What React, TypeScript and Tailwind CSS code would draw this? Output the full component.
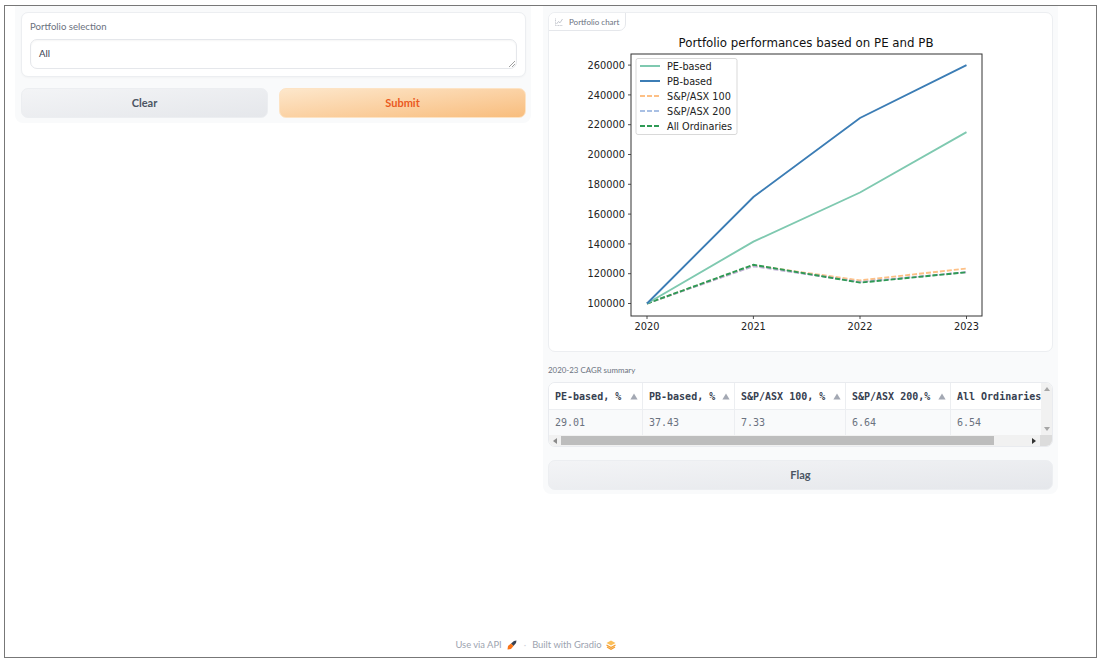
const ys = (v: number) => 303.5 - ((v - 100000) / 20000) * 29.8
const xs = [647, 753.4, 860, 966.5]

const series = [
  { label: "S&P/ASX 100", color: "#fdc086", dash: "5 2", data: [100000, 125500, 115500, 123500] },
  { label: "S&P/ASX 200", color: "#beaed4", dash: "5 2", data: [100000, 125000, 114500, 121000] },
  { label: "All Ordinaries", color: "#2e9a55", dash: "5 2", data: [100000, 126000, 114000, 121000] },
  { label: "PE-based", color: "#7fc9b0", dash: "", data: [100000, 141500, 174500, 215000] },
  { label: "PB-based", color: "#3c7db5", dash: "", data: [100000, 171500, 224500, 260000] },
]

const legend = [
  { label: "PE-based", color: "#7fc9b0", dash: "" },
  { label: "PB-based", color: "#3c7db5", dash: "" },
  { label: "S&P/ASX 100", color: "#fdc086", dash: "5 2" },
  { label: "S&P/ASX 200", color: "#a9c0e4", dash: "5 2" },
  { label: "All Ordinaries", color: "#2e9a55", dash: "5 2" },
]

const columns = [
  { name: "PE-based, %", value: "29.01", width: "w-[94px]" },
  { name: "PB-based, %", value: "37.43", width: "w-[92px]" },
  { name: "S&P/ASX 100, %", value: "7.33", width: "w-[111px]" },
  { name: "S&P/ASX 200,%", value: "6.64", width: "w-[105px]" },
]

function Chart() {
  // svg coords are page coords shifted by the card origin
  return (
    <svg width="503" height="338" viewBox="549 13 503 338" className="block">
      <text x="806" y="47" textAnchor="middle" fontFamily="DejaVu Sans" fontSize="11.8" fill="#111">
        Portfolio performances based on PE and PB
      </text>
      {[100000, 120000, 140000, 160000, 180000, 200000, 220000, 240000, 260000].map(v => (
        <g key={v}>
          <line x1="628" x2="631" y1={ys(v)} y2={ys(v)} stroke="#222" strokeWidth="0.8" />
          <text x="625" y={ys(v) + 3.6} textAnchor="end" fontFamily="DejaVu Sans" fontSize="9.8" fill="#222">
            {v}
          </text>
        </g>
      ))}
      {xs.map((x, i) => (
        <g key={x}>
          <line x1={x} x2={x} y1="316" y2="319" stroke="#222" strokeWidth="0.8" />
          <text x={x} y="330" textAnchor="middle" fontFamily="DejaVu Sans" fontSize="9.8" fill="#222">
            {2020 + i}
          </text>
        </g>
      ))}
      {series.map(s => (
        <polyline
          key={s.label}
          points={s.data.map((v, i) => `${xs[i]},${ys(v)}`).join(" ")}
          fill="none"
          stroke={s.color}
          strokeWidth="1.9"
          strokeDasharray={s.dash}
        />
      ))}
      <rect x="631" y="54" width="351" height="262" fill="none" stroke="#333" strokeWidth="1" />
      <rect x="636" y="58.5" width="101" height="76" rx="2" fill="#fff" fillOpacity="0.85" stroke="#d5d5d5" strokeWidth="0.9" />
      {legend.map((l, i) => (
        <g key={l.label}>
          <line x1="640" x2="660" y1={66 + i * 15} y2={66 + i * 15} stroke={l.color} strokeWidth="1.9" strokeDasharray={l.dash} />
          <text x="667" y={69.6 + i * 15} fontFamily="DejaVu Sans" fontSize="9.7" fill="#222">
            {l.label}
          </text>
        </g>
      ))}
    </svg>
  )
}

function SortArrow() {
  return (
    <svg width="8" height="7" viewBox="0 0 8 7" className="shrink-0">
      <path d="M4 0.5 L7.6 6.5 L0.4 6.5 Z" fill="#a3a8b3" />
    </svg>
  )
}

function Table() {
  return (
    <div className="flex h-[65px] w-[505px] flex-col overflow-hidden rounded-[7px] border border-[#e9ebef] bg-white font-['DejaVu_Sans_Mono',monospace] text-[10px]">
      <div className="flex h-[52px]">
        <div className="flex w-[492px] flex-col">
          <div className="flex h-[27px] border-b border-[#eceef1] bg-white font-bold text-[#374151]">
            {columns.map(c => (
              <div key={c.name} className={`flex ${c.width} items-center justify-between border-r border-[#eceef1] pl-[6px] pr-[4px]`}>
                <span className="whitespace-nowrap">{c.name}</span>
                <SortArrow />
              </div>
            ))}
            <div className="flex flex-1 items-center overflow-hidden pl-[6px] whitespace-nowrap">All Ordinaries</div>
          </div>
          <div className="flex h-[25px] bg-[#f9fafb] text-[#6b7280]">
            {columns.map(c => (
              <div key={c.name} className={`flex ${c.width} items-center border-r border-[#eceef1] pl-[6px]`}>
                {c.value}
              </div>
            ))}
            <div className="flex flex-1 items-center pl-[6px]">6.54</div>
          </div>
        </div>
        <div className="flex w-[12px] flex-col items-center justify-between bg-[#f1f1f1] py-[4px]">
          <svg width="6" height="4" viewBox="0 0 6 4"><path d="M3 0 L6 4 L0 4 Z" fill="#a6a6a6" /></svg>
          <svg width="6" height="4" viewBox="0 0 6 4"><path d="M3 4 L6 0 L0 0 Z" fill="#a6a6a6" /></svg>
        </div>
      </div>
      <div className="flex h-[12px] items-center bg-[#f1f1f1]">
        <div className="flex w-[12px] justify-center">
          <svg width="4" height="6" viewBox="0 0 4 6"><path d="M0 3 L4 0 L4 6 Z" fill="#8a8a8a" /></svg>
        </div>
        <div className="h-[9px] w-[433px] bg-[#bdbdbd]" />
        <div className="flex flex-1 justify-end pr-[4px]">
          <svg width="4" height="6" viewBox="0 0 4 6"><path d="M4 3 L0 0 L0 6 Z" fill="#333" /></svg>
        </div>
        <div className="h-full w-[12px] bg-[#dcdcdc]" />
      </div>
    </div>
  )
}

export default function App() {
  return (
    <div className="h-[661px] w-[1097px] bg-white pl-[4px] pt-[5px] font-['Lato','Noto_Sans',sans-serif]">
      <div className="flex h-[653px] w-[1093px] flex-col border border-[#777]">
        <div className="flex items-start gap-[12px] pl-[10px]">
          {/* Left column */}
          <div className="flex w-[516px] flex-col gap-[11px] rounded-b-[8px] bg-[#f9fafb] pb-[5px] pl-[6px] pr-[5px] pt-[6px]">
            <div className="h-[65px] rounded-[7px] border border-[#eceef1] bg-white px-[8px] pt-[7px] shadow-[0_1px_2px_rgba(0,0,0,0.03)]">
              <div className="text-[9.6px] leading-[14px] text-[#6b7280]">Portfolio selection</div>
              <div className="relative mt-[5px] flex h-[30px] items-start rounded-[7px] border border-[#e5e7eb] bg-white pl-[8px] pt-[7px] text-[9.6px] leading-[14px] text-[#374151] shadow-[inset_0_1px_2px_rgba(0,0,0,0.04)]">
                All
                <svg width="7" height="7" viewBox="0 0 7 7" className="absolute bottom-[1px] right-[1px]">
                  <path d="M1 7 L7 1 M4 7 L7 4" stroke="#888" strokeWidth="0.8" />
                </svg>
              </div>
            </div>
            <div className="flex gap-[11px]">
              <button className="h-[30px] w-[247px] rounded-[7px] border border-[#eceef1] bg-gradient-to-br from-[#f3f4f6] to-[#e5e7eb] text-[11px] font-bold text-[#4b5563]">
                Clear
              </button>
              <button className="h-[30px] w-[247px] rounded-[7px] border border-[#fde3c4] bg-gradient-to-br from-[#fde7cb] to-[#f8bd7d] text-[11px] font-bold text-[#ea5a1f]">
                Submit
              </button>
            </div>
          </div>

          {/* Right column */}
          <div className="flex w-[515px] flex-col rounded-b-[8px] bg-[#f9fafb] px-[5px] pb-[4px] pt-[6px]">
            <div className="relative h-[340px] overflow-hidden rounded-[7px] border border-[#eceef1] bg-white">
              <Chart />
              <div className="absolute left-[-1px] top-[-1px] flex h-[19px] w-[78px] items-center gap-[6px] whitespace-nowrap rounded-br-[7px] border border-[#e5e7eb] bg-white pl-[6px] text-[8px] text-[#6b7280]">
                <svg width="8" height="8" viewBox="0 0 8 8" fill="none" stroke="#b5b9c2" strokeWidth="0.8" className="shrink-0">
                  <path d="M0.5 0.5 V7.5 H7.5" strokeDasharray="1 0.6" />
                  <path d="M1.5 6 L3.5 3.5 L5 4.8 L7.5 1" />
                </svg>
                Portfolio chart
              </div>
            </div>
            <div className="mt-[12px] text-[7.9px] leading-[12px] text-[#6b7280]">2020-23 CAGR summary</div>
            <div className="mt-[6px]">
              <Table />
            </div>
            <button className="mt-[13px] h-[30px] w-[505px] rounded-[7px] border border-[#eceef1] bg-gradient-to-br from-[#f3f4f6] to-[#e5e7eb] text-[11px] font-bold text-[#4b5563]">
              Flag
            </button>
          </div>
        </div>

        {/* Footer */}
        <div className="mt-auto flex h-[19px] items-start justify-center pr-[30px] text-[9.4px] leading-[14px] text-[#9ca3af]">
          <span>Use via API</span>
          <svg width="10" height="10" viewBox="0 0 10 10" className="ml-[5px] mt-[2px]">
            <path d="M4 3.5 L7 1 L9.5 0.5 L9 3 L6.5 6 Z" fill="#374151" />
            <path d="M4 3.5 L6.5 6 L4 9 L0.5 9.5 L1 6 Z" fill="#f97316" />
          </svg>
          <span className="ml-[7px] text-[#d1d5db]">·</span>
          <span className="ml-[6px]">Built with Gradio</span>
          <svg width="10" height="10" viewBox="0 0 10 10" className="ml-[4px] mt-[2px]">
            <path d="M5 0.5 L9.5 3 L5 5.5 L0.5 3 Z" fill="#fbbf5a" />
            <path d="M0.5 5 L5 7.5 L9.5 5 M1 7 L5 9.3 L9 7" fill="none" stroke="#f59e2e" strokeWidth="1.3" />
          </svg>
        </div>
      </div>
    </div>
  )
}
